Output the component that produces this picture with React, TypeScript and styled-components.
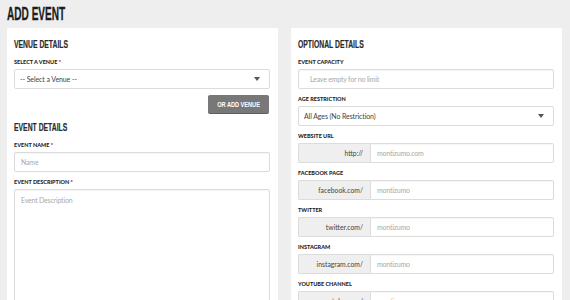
import React from "react";
import styled, { createGlobalStyle } from "styled-components";

const GlobalStyle = createGlobalStyle`
  html, body {
    margin: 0;
    background: #eeeeee;
  }
  body {
    font-family: Lato, "Open Sans", sans-serif;
    color: #333;
  }
  * {
    box-sizing: border-box;
  }
`;

const Page = styled.div`
  padding: 4px 8px 0 7px;
`;

const Title = styled.h1`
  margin: 0 0 4px;
  font-family: "Liberation Sans", Arial, sans-serif;
  font-weight: 700;
  font-size: 18px;
  line-height: 20px;
  color: #1c1c1c;
  -webkit-text-stroke: 0.3px #1c1c1c;
  transform: scaleX(0.56);
  transform-origin: left center;
`;

const Columns = styled.div`
  display: grid;
  grid-template-columns: 1fr 1fr;
  column-gap: 13px;
  align-items: start;
`;

const Card = styled.section`
  background: #fff;
  padding: 9px 8px 14px 7px;
`;

const SectionTitle = styled.h2`
  margin: 0 0 7px;
  font-family: "Liberation Sans", Arial, sans-serif;
  font-weight: 700;
  font-size: 11px;
  line-height: 14px;
  color: #2b2b2b;
  -webkit-text-stroke: 0.2px #2b2b2b;
  white-space: nowrap;
  transform: scaleX(0.62);
  transform-origin: left center;
`;

const Field = styled.div`
  margin-bottom: 6.5px;
`;

const Label = styled.label`
  display: block;
  margin-bottom: 2.5px;
  font-size: 5.5px;
  line-height: 8px;
  font-weight: 900;
  color: #1e1e1e;
  text-transform: uppercase;
  white-space: nowrap;
`;

const Required = styled.span`
  color: #c4122f;
`;

const TextInput = styled.input<{ $indent?: number }>`
  display: block;
  width: 100%;
  height: 20px;
  padding: 0 6px 0 ${(p) => p.$indent ?? 6}px;
  border: 1px solid #dcdcdc;
  border-radius: 2px;
  background: #fff;
  box-shadow: inset 0 1px 1px rgba(0, 0, 0, 0.04);
  font-family: Lato, "Open Sans", sans-serif;
  font-size: 7px;
  letter-spacing: -0.2px;
  color: #555;
  outline: none;
  &::placeholder {
    color: #a9a9a9;
  }
`;

const TextArea = styled.textarea`
  display: block;
  width: 100%;
  height: 150px;
  padding: 6px;
  border: 1px solid #dcdcdc;
  border-radius: 2px;
  resize: none;
  box-shadow: inset 0 1px 1px rgba(0, 0, 0, 0.04);
  font-family: Lato, "Open Sans", sans-serif;
  font-size: 7px;
  letter-spacing: -0.2px;
  color: #555;
  outline: none;
  &::placeholder {
    color: #a9a9a9;
  }
`;

const SelectBox = styled.div`
  position: relative;
`;

const Select = styled.select`
  display: block;
  width: 100%;
  height: 20px;
  padding: 0 20px 0 5px;
  border: 1px solid #dcdcdc;
  border-radius: 2px;
  background: #fff;
  appearance: none;
  font-family: Lato, "Open Sans", sans-serif;
  font-size: 7px;
  letter-spacing: -0.1px;
  color: #444;
  outline: none;
`;

const Caret = styled.svg`
  position: absolute;
  right: 10px;
  top: 8px;
  width: 6px;
  height: 4px;
  pointer-events: none;
`;

const InputGroup = styled.div`
  display: flex;
  height: 20px;
`;

const Addon = styled.span`
  flex: 0 0 72px;
  padding-right: 7px;
  border: 1px solid #dcdcdc;
  border-right: none;
  border-radius: 2px 0 0 2px;
  background: #efefef;
  font-size: 6.8px;
  line-height: 18px;
  color: #444;
  text-align: right;
`;

const GroupInput = styled(TextInput)`
  flex: 1;
  min-width: 0;
  border-radius: 0 2px 2px 0;
`;

const ButtonRow = styled.div`
  display: flex;
  justify-content: flex-end;
  margin: 1.5px 1px 7px 0;
`;

const GrayButton = styled.button`
  width: 61px;
  height: 18px;
  padding: 0;
  border: none;
  border-radius: 2px;
  background: #787878;
  box-shadow: 0 1px 0 #5f5f5f;
  color: #fff;
  font-family: "Liberation Sans", Arial, sans-serif;
  font-weight: 700;
  font-size: 8px;
  cursor: pointer;
`;

const ButtonText = styled.span`
  display: inline-block;
  white-space: nowrap;
  transform: scaleX(0.7);
`;

const DropCaret = () => (
  <Caret viewBox="0 0 6 4">
    <polygon points="0,0 6,0 3,4" fill="#555" />
  </Caret>
);

const socials = [
  { label: "Website URL", prefix: "http://", placeholder: "montizumo.com" },
  { label: "Facebook Page", prefix: "facebook.com/", placeholder: "montizumo" },
  { label: "Twitter", prefix: "twitter.com/", placeholder: "montizumo" },
  { label: "Instagram", prefix: "instagram.com/", placeholder: "montizumo" },
  { label: "YouTube Channel", prefix: "youtube.com/", placeholder: "montizumo" },
];

export default function App() {
  return (
    <>
      <GlobalStyle />
      <Page>
        <Title>ADD EVENT</Title>
        <Columns>
          <Card>
            <SectionTitle>VENUE DETAILS</SectionTitle>
            <Field>
              <Label>
                Select a Venue <Required>*</Required>
              </Label>
              <SelectBox>
                <Select defaultValue="">
                  <option value="">-- Select a Venue --</option>
                </Select>
                <DropCaret />
              </SelectBox>
            </Field>
            <ButtonRow>
              <GrayButton>
                <ButtonText>OR ADD VENUE</ButtonText>
              </GrayButton>
            </ButtonRow>

            <SectionTitle>EVENT DETAILS</SectionTitle>
            <Field>
              <Label>
                Event Name <Required>*</Required>
              </Label>
              <TextInput placeholder="Name" />
            </Field>
            <Field>
              <Label>
                Event Description <Required>*</Required>
              </Label>
              <TextArea placeholder="Event Description" />
            </Field>
          </Card>

          <Card>
            <SectionTitle>OPTIONAL DETAILS</SectionTitle>
            <Field>
              <Label>Event Capacity</Label>
              <TextInput $indent={11} placeholder="Leave empty for no limit" />
            </Field>
            <Field>
              <Label>Age Restriction</Label>
              <SelectBox>
                <Select defaultValue="all">
                  <option value="all">All Ages (No Restriction)</option>
                </Select>
                <DropCaret />
              </SelectBox>
            </Field>
            {socials.map((s) => (
              <Field key={s.label}>
                <Label>{s.label}</Label>
                <InputGroup>
                  <Addon>{s.prefix}</Addon>
                  <GroupInput placeholder={s.placeholder} />
                </InputGroup>
              </Field>
            ))}
          </Card>
        </Columns>
      </Page>
    </>
  );
}
